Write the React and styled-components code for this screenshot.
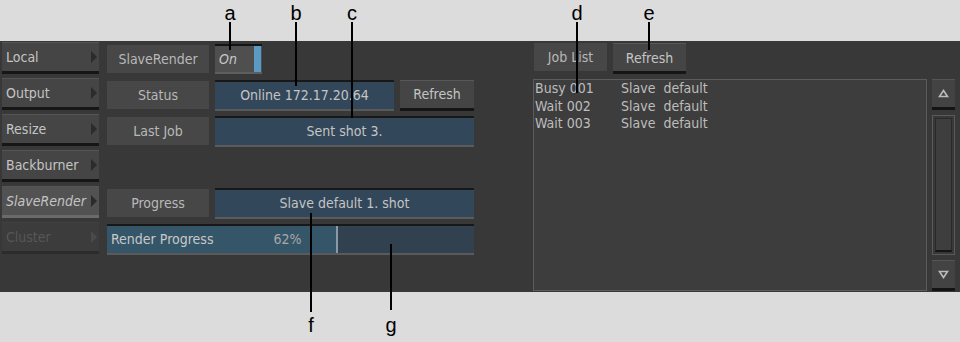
import React from "react";
import styled, { createGlobalStyle, css } from "styled-components";

const GlobalStyle = createGlobalStyle`
  html, body {
    margin: 0;
    padding: 0;
    background: #dcdcdc;
  }
`;

const Page = styled.div`
  position: relative;
  width: 960px;
  height: 342px;
  background: #dcdcdc;
  padding-top: 41px;
  box-sizing: border-box;
  font-family: "DejaVu Sans Condensed", "DejaVu Sans", sans-serif;
`;

const Panel = styled.div`
  height: 251px;
  background: #383838;
  display: flex;
  padding: 1px 0 0 2px;
  box-sizing: border-box;
`;

const SideColumn = styled.div`
  width: 97px;
  display: flex;
  flex-direction: column;
  gap: 4px;
`;

const SideButton = styled.div`
  height: 32px;
  box-sizing: border-box;
  display: flex;
  align-items: center;
  justify-content: space-between;
  padding: 0 2px 0 4px;
  font-size: 14px;
  color: ${(p) => (p.disabled ? "#575757" : "#c4c4c4")};
  font-style: ${(p) => (p.active ? "italic" : "normal")};
  background: ${(p) => (p.active ? "#525252" : p.disabled ? "#3c3c3c" : "#454545")};
  border-top: 1px solid ${(p) => (p.disabled ? "#404040" : "#555")};
  border-bottom: 3px solid ${(p) => (p.active ? "#6a6a6a" : p.disabled ? "#2c2c2c" : "#161616")};
`;

const Arrow = styled.span`
  width: 0;
  height: 0;
  border-top: 6px solid transparent;
  border-bottom: 6px solid transparent;
  border-left: 6px solid ${(p) => (p.dim ? "#4a4a4a" : "#2b2b2b")};
`;

const MainGrid = styled.div`
  margin-left: 8px;
  width: 367px;
  display: grid;
  grid-template-columns: 102px 179px 74px;
  grid-auto-rows: 32px;
  row-gap: 4px;
  column-gap: 6px;
  align-items: center;
  padding-top: 1px;
`;

const Label = styled.div`
  height: 28px;
  display: flex;
  align-items: center;
  justify-content: center;
  background: #474747;
  color: #b8b8b8;
  font-size: 14px;
`;

const Field = styled.div`
  grid-column: ${(p) => (p.wide ? "2 / 4" : "2 / 3")};
  height: 31px;
  box-sizing: border-box;
  display: flex;
  align-items: center;
  justify-content: center;
  background: #33475a;
  color: #c4c4c4;
  font-size: 14px;
  border-top: 2px solid #181818;
  border-bottom: 2px solid #5a5a5a;
`;

const Toggle = styled.div`
  grid-column: 2 / 3;
  width: 47px;
  height: 30px;
  box-sizing: border-box;
  display: flex;
  align-items: center;
  background: #4f4f4f;
  border-top: 2px solid #141414;
  border-bottom: 2px solid #5e5e5e;
  color: #c8c8c8;
  font-size: 14px;
  font-style: italic;
  padding-left: 4px;
  position: relative;
  &::after {
    content: "";
    position: absolute;
    right: 1px;
    top: 0;
    bottom: 0;
    width: 7px;
    background: #5b9ac4;
  }
`;

const Button = styled.div`
  height: 31px;
  box-sizing: border-box;
  display: flex;
  align-items: center;
  justify-content: center;
  background: #454545;
  color: #c4c4c4;
  font-size: 14px;
  border-top: 1px solid #585858;
  border-bottom: 3px solid #151515;
  ${(p) =>
    p.w &&
    css`
      width: ${p.w}px;
    `}
`;

const ProgressBar = styled.div`
  grid-column: 1 / 4;
  height: 31px;
  box-sizing: border-box;
  display: flex;
  background: #31414f;
  border-top: 2px solid #181818;
  border-bottom: 2px solid #5a5a5a;
  font-size: 14px;
  color: #c8c8c8;
`;

const ProgressFill = styled.div`
  background: #355668;
  border-right: 2px solid #8a9aa4;
  display: flex;
  align-items: center;
  justify-content: space-between;
  padding: 0 34px 0 4px;
  box-sizing: border-box;
`;

const Percent = styled.span`
  color: #a8a8a8;
`;

const RightArea = styled.div`
  margin-left: 59px;
  display: flex;
  flex-direction: column;
  padding-top: 1px;
`;

const RightHeader = styled.div`
  display: flex;
  gap: 6px;
  align-items: flex-start;
  margin-left: 1px;
`;

const RightBody = styled.div`
  display: flex;
  gap: 5px;
  margin-top: 5px;
`;

const JobList = styled.div`
  width: 394px;
  height: 212px;
  box-sizing: border-box;
  border: 1px solid #5c5c5c;
  background: #3d3d3d;
  padding: 0 0 0 1px;
  font-size: 14px;
  line-height: 17.5px;
  color: #bdbdbd;
`;

const JobRow = styled.div`
  display: grid;
  grid-template-columns: 86px auto;
  white-space: pre;
`;

const Scroll = styled.div`
  width: 23px;
  display: flex;
  flex-direction: column;
  gap: 5px;
  padding-top: 0;
`;

const ScrollButton = styled.div`
  height: 31px;
  box-sizing: border-box;
  background: #434343;
  border-top: 1px solid #555;
  border-bottom: 3px solid #141414;
  display: flex;
  align-items: center;
  justify-content: center;
`;

const ScrollTrack = styled.div`
  flex: 1;
  box-sizing: border-box;
  border: 1px solid #5a5a5a;
  padding: 2px;
  display: flex;
  &::before {
    content: "";
    flex: 1;
    background: #3e3e3e;
    border: 1px solid #2a2a2a;
    border-bottom: 2px solid #151515;
  }
`;

const Callout = styled.div`
  position: absolute;
  left: ${(p) => p.x - 1}px;
  top: ${(p) => p.top}px;
  width: 2px;
  height: ${(p) => p.h}px;
  background: #000;
`;

const Letter = styled.div`
  position: absolute;
  left: ${(p) => p.x - 10}px;
  top: ${(p) => p.top}px;
  width: 20px;
  text-align: center;
  font-family: "Liberation Sans", Arial, sans-serif;
  font-size: 20px;
  line-height: 20px;
  color: #000;
`;

const Triangle = ({ down }) => (
  <svg width="11" height="9" viewBox="0 0 11 9">
    <path
      d={down ? "M1.5 1.5 H9.5 L5.5 7.5 Z" : "M5.5 1.5 L9.5 7.5 H1.5 Z"}
      fill="none"
      stroke="#bcbcbc"
      strokeWidth="1.6"
    />
  </svg>
);

const sideItems = [
  { name: "Local" },
  { name: "Output" },
  { name: "Resize" },
  { name: "Backburner" },
  { name: "SlaveRender", active: true },
  { name: "Cluster", disabled: true },
];

const jobs = [
  ["Busy 001", "Slave  default"],
  ["Wait 002", "Slave  default"],
  ["Wait 003", "Slave  default"],
];

const progress = 62;

const callouts = [
  { l: "a", x: 230, top: 22, h: 28, lt: 3 },
  { l: "b", x: 296, top: 22, h: 64, lt: 3 },
  { l: "c", x: 352, top: 22, h: 96, lt: 3 },
  { l: "d", x: 577, top: 22, h: 71, lt: 3 },
  { l: "e", x: 649, top: 22, h: 28, lt: 3 },
  { l: "f", x: 311, top: 213, h: 99, lt: 315 },
  { l: "g", x: 391, top: 244, h: 66, lt: 315 },
];

export default function App() {
  return (
    <Page>
      <GlobalStyle />
      <Panel>
        <SideColumn>
          {sideItems.map((it) => (
            <SideButton key={it.name} active={it.active} disabled={it.disabled}>
              <span>{it.name}</span>
              <Arrow dim={it.disabled} />
            </SideButton>
          ))}
        </SideColumn>

        <MainGrid>
          <Label>SlaveRender</Label>
          <Toggle>On</Toggle>
          <span />

          <Label>Status</Label>
          <Field>Online 172.17.20.64</Field>
          <Button>Refresh</Button>

          <Label>Last Job</Label>
          <Field wide>Sent shot 3.</Field>

          <span />
          <span />
          <span />

          <Label>Progress</Label>
          <Field wide>Slave default 1. shot</Field>

          <ProgressBar>
            <ProgressFill style={{ width: `calc(${progress}% + 3px)` }}>
              <span>Render Progress</span>
              <Percent>{progress}%</Percent>
            </ProgressFill>
          </ProgressBar>
        </MainGrid>

        <RightArea>
          <RightHeader>
            <Label style={{ width: 73 }}>Job List</Label>
            <Button w={73}>Refresh</Button>
          </RightHeader>
          <RightBody>
            <JobList>
              {jobs.map(([a, b]) => (
                <JobRow key={a}>
                  <span>{a}</span>
                  <span>{b}</span>
                </JobRow>
              ))}
            </JobList>
            <Scroll>
              <ScrollButton>
                <Triangle />
              </ScrollButton>
              <ScrollTrack />
              <ScrollButton>
                <Triangle down />
              </ScrollButton>
            </Scroll>
          </RightBody>
        </RightArea>
      </Panel>

      {callouts.map((c) => (
        <React.Fragment key={c.l}>
          <Callout x={c.x} top={c.top} h={c.h} />
          <Letter x={c.x} top={c.lt}>
            {c.l}
          </Letter>
        </React.Fragment>
      ))}
    </Page>
  );
}
